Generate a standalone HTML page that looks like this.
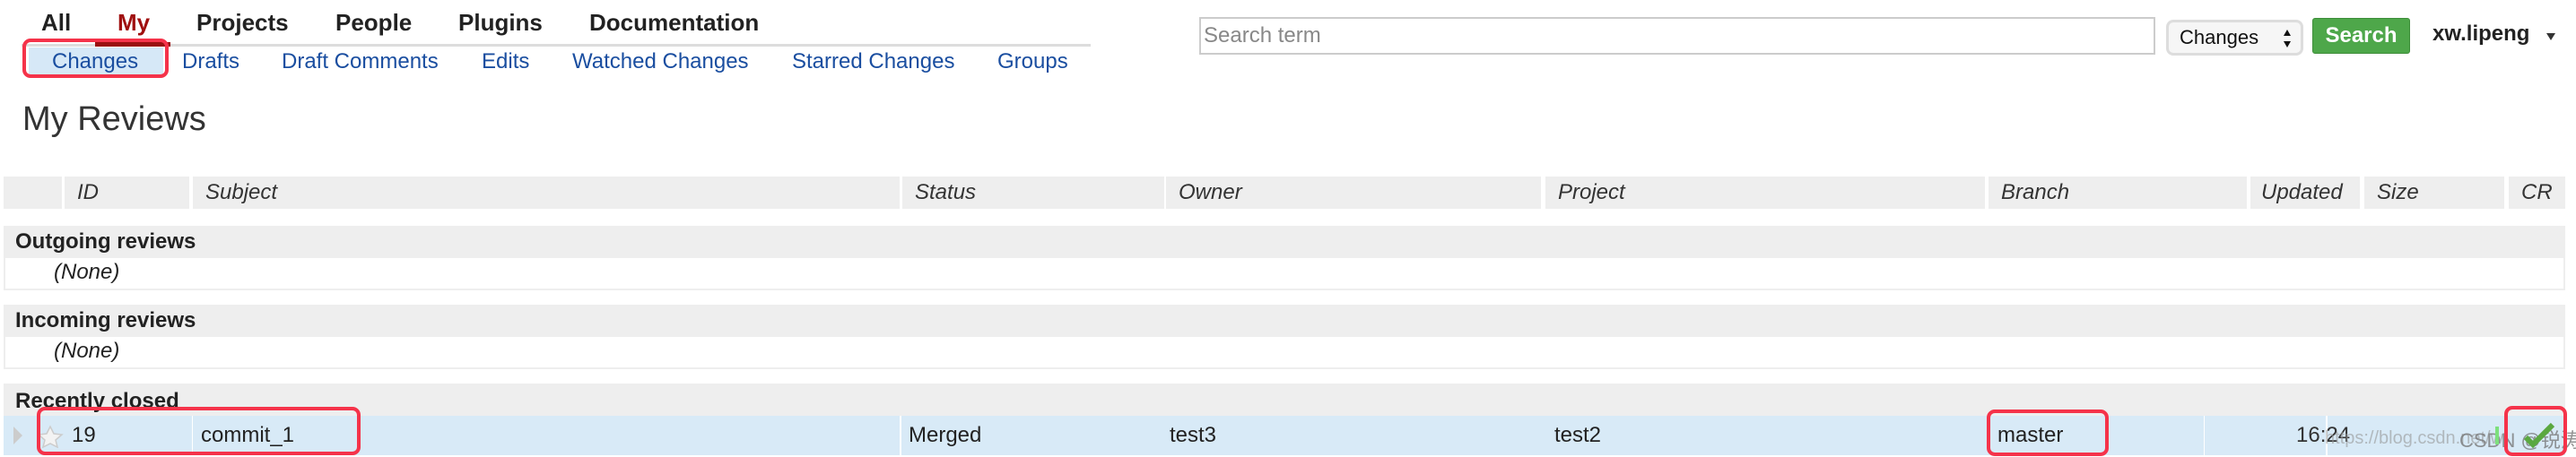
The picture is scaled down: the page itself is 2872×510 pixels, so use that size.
<!DOCTYPE html>
<html><head><meta charset="utf-8"><style>
*{margin:0;padding:0;box-sizing:border-box}
body{width:2872px;height:510px;background:#fff;font-family:"Liberation Sans",Arial,sans-serif;position:relative;overflow:hidden;color:#222}
.a{position:absolute;white-space:nowrap}
.nav{font-size:26px;font-weight:bold;color:#222;top:10px}
.sub{font-size:24px;color:#1a4ea0;top:55px}
.hd{position:absolute;top:197px;height:36px;background:#eee;font-style:italic;font-size:24px;color:#333;line-height:36px;padding-left:14px}
.cell{position:absolute;top:464px;height:44px;background:#d8eaf7;font-size:24px;line-height:44px;color:#222}
.band{position:absolute;left:4px;width:2856px;background:#eee;font-weight:bold;font-size:24px;line-height:36px;padding-left:13px}
.none{position:absolute;left:4px;width:2856px;height:36px;background:#fff;border:2px solid #eee;border-top:0;font-style:italic;font-size:24px;line-height:32px;padding-left:54px;color:#222}
.red{position:absolute;border:4px solid #f5334a;border-radius:9px}
</style></head><body>
<div class="a nav" style="left:46px">All</div>
<div class="a nav" style="left:131px;color:#a01010">My</div>
<div class="a nav" style="left:219px">Projects</div>
<div class="a nav" style="left:374px">People</div>
<div class="a nav" style="left:511px">Plugins</div>
<div class="a nav" style="left:657px">Documentation</div>
<div class="a" style="left:24px;top:49px;width:1192px;height:3px;background:#ddd"></div>
<div class="a" style="left:106px;top:47px;width:84px;height:5px;background:#9a1010"></div>
<div class="a" style="left:32px;top:53px;width:150px;height:31px;background:#d6e8f7"></div>
<div class="a sub" style="left:58px">Changes</div>
<div class="a sub" style="left:203px">Drafts</div>
<div class="a sub" style="left:314px">Draft Comments</div>
<div class="a sub" style="left:537px">Edits</div>
<div class="a sub" style="left:638px">Watched Changes</div>
<div class="a sub" style="left:883px">Starred Changes</div>
<div class="a sub" style="left:1112px">Groups</div>
<div class="red" style="left:25px;top:43px;width:163px;height:44px"></div>
<div class="a" style="left:25px;top:112px;font-size:38px;color:#333">My Reviews</div>

<div class="a" style="left:1337px;top:19px;width:1066px;height:42px;border:2px solid #ccc;font-size:24px;color:#888;line-height:38px;padding-left:3px">Search term</div>
<div class="a" style="left:2415px;top:22px;width:153px;height:40px;border:3px solid #ddd;border-radius:8px;background:#f6f6f6;font-size:22px;line-height:34px;padding-left:12px;color:#111">Changes<svg style="position:absolute;left:126px;top:7px" width="12" height="22"><path d="M6 1 L10 8 L2 8 Z M6 21 L10 14 L2 14 Z" fill="#111"/></svg></div>
<div class="a" style="left:2578px;top:20px;width:109px;height:40px;background:#4ea74a;border:1px solid #3e8e3a;border-radius:3px;color:#fff;font-weight:bold;font-size:24px;line-height:38px;text-align:center">Search</div>
<div class="a" style="left:2712px;top:24px;font-size:24px;font-weight:bold;color:#222">xw.lipeng</div>
<svg class="a" style="left:2838px;top:36px" width="12" height="10"><path d="M1 1 L11 1 L6 9 Z" fill="#333"/></svg>

<div class="hd" style="left:4px;width:65px"></div>
<div class="hd" style="left:72px;width:139px">ID</div>
<div class="hd" style="left:215px;width:788px">Subject</div>
<div class="hd" style="left:1006px;width:292px">Status</div>
<div class="hd" style="left:1300px;width:418px">Owner</div>
<div class="hd" style="left:1723px;width:490px">Project</div>
<div class="hd" style="left:2217px;width:288px">Branch</div>
<div class="hd" style="left:2509px;width:122px;padding-left:12px">Updated</div>
<div class="hd" style="left:2636px;width:156px">Size</div>
<div class="hd" style="left:2797px;width:63px">CR</div>

<div class="band" style="top:252px;height:36px">Outgoing reviews</div>
<div class="none" style="top:288px">(None)</div>
<div class="band" style="top:340px;height:36px">Incoming reviews</div>
<div class="none" style="top:376px">(None)</div>
<div class="band" style="top:428px;height:36px;line-height:40px">Recently closed</div>

<div class="cell" style="left:4px;width:210px"></div>
<div class="cell" style="left:215px;width:788px"></div>
<div class="cell" style="left:1005px;width:1452px"></div>
<div class="cell" style="left:2458px;width:135px"></div>
<div class="cell" style="left:2595px;width:265px"></div>
<svg class="a" style="left:12px;top:474px" width="70" height="26"><path d="M3 2 L13 12 L3 22 Z" fill="#ccc"/><path d="M44 2 L48 10 L57 11 L50 17 L52 25 L44 21 L36 25 L38 17 L31 11 L40 10 Z" fill="#f3f3f3" stroke="#ccc" stroke-width="1.5"/></svg>
<div class="a" style="left:80px;top:464px;font-size:24px;line-height:44px">19</div>
<div class="a" style="left:224px;top:464px;font-size:24px;line-height:44px">commit_1</div>
<div class="a" style="left:1013px;top:464px;font-size:24px;line-height:44px">Merged</div>
<div class="a" style="left:1304px;top:464px;font-size:24px;line-height:44px">test3</div>
<div class="a" style="left:1733px;top:464px;font-size:24px;line-height:44px">test2</div>
<div class="a" style="left:2227px;top:464px;font-size:24px;line-height:44px">master</div>
<div class="a" style="left:2560px;top:464px;font-size:24px;line-height:44px;color:#333">16:24</div>
<div class="a" style="left:2592px;top:478px;font-size:20px;color:rgba(150,150,150,0.6)">https://blog.csdn.net/w</div>
<div class="a" style="left:2742px;top:474px;font-size:22px;color:rgba(120,120,120,0.8);font-family:'Liberation Sans','Noto Sans CJK SC',sans-serif">CSDN @锐涛</div>
<div class="a" style="left:2782px;top:476px;width:4px;height:20px;background:#7de07d"></div>
<svg class="a" style="left:2812px;top:468px" width="40" height="34"><path d="M4 20 L12 28 L34 6" fill="none" stroke="#5aa840" stroke-width="6"/></svg>
<div class="red" style="left:41px;top:454px;width:361px;height:54px"></div>
<div class="red" style="left:2215px;top:457px;width:136px;height:52px"></div>
<div class="red" style="left:2792px;top:453px;width:70px;height:56px"></div>
</body></html>
